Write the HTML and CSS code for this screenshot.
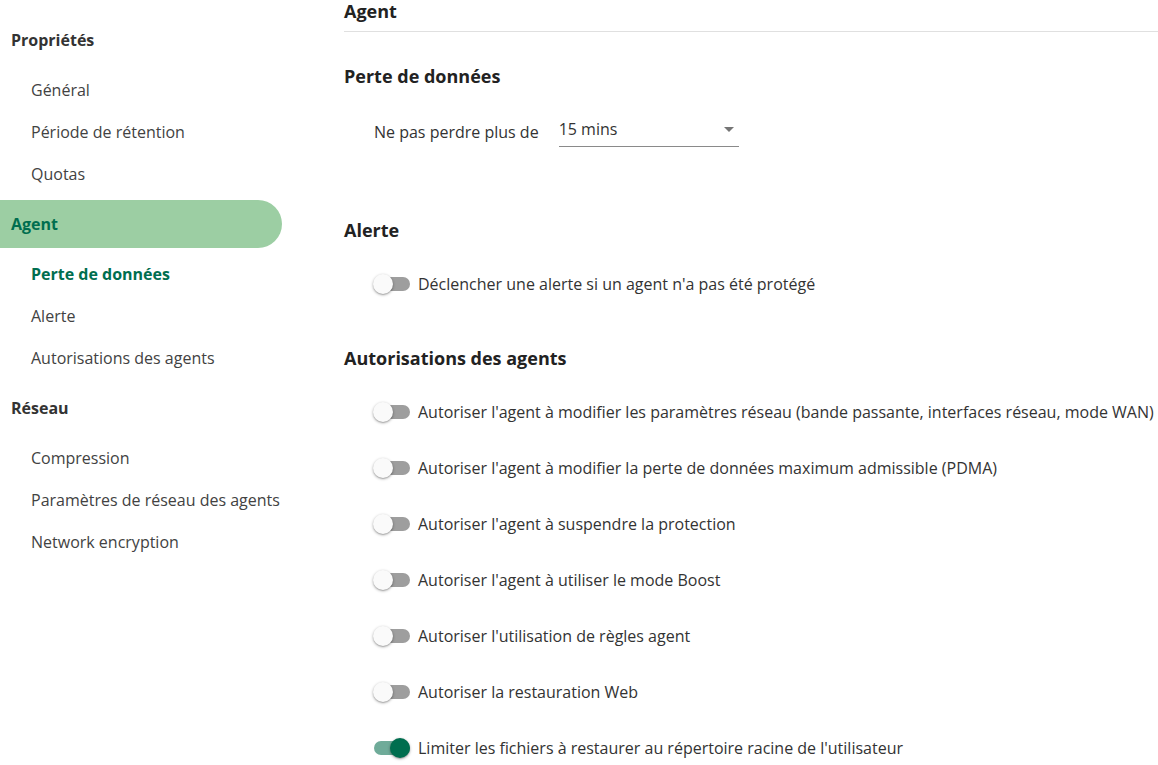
FILE: index.html
```html
<!DOCTYPE html>
<html lang="fr">
<head>
<meta charset="utf-8">
<title>Agent</title>
<link rel="stylesheet" href="styles.css">
</head>
<body>
<div class="layout">
  <nav class="sidebar">
    <div class="nav-group">
      <div class="nav-header">Propriétés</div>
      <ul class="nav-list">
        <li class="nav-item">Général</li>
        <li class="nav-item">Période de rétention</li>
        <li class="nav-item">Quotas</li>
      </ul>
    </div>
    <div class="nav-group">
      <div class="nav-header active">Agent</div>
      <ul class="nav-list">
        <li class="nav-item current">Perte de données</li>
        <li class="nav-item">Alerte</li>
        <li class="nav-item">Autorisations des agents</li>
      </ul>
    </div>
    <div class="nav-group">
      <div class="nav-header">Réseau</div>
      <ul class="nav-list">
        <li class="nav-item">Compression</li>
        <li class="nav-item">Paramètres de réseau des agents</li>
        <li class="nav-item">Network encryption</li>
      </ul>
    </div>
  </nav>

  <main class="content">
    <h1 class="page-title">Agent</h1>

    <section class="section section-loss">
      <h2 class="section-title">Perte de données</h2>
      <div class="field-row">
        <span class="field-label">Ne pas perdre plus de</span>
        <div class="select">
          <span class="select-value">15 mins</span>
          <span class="select-arrow"></span>
        </div>
      </div>
    </section>

    <section class="section section-alert">
      <h2 class="section-title">Alerte</h2>
      <div class="toggle-list">
        <label class="toggle-row"><span class="toggle"><span class="knob"></span></span><span class="toggle-text">Déclencher une alerte si un agent n'a pas été protégé</span></label>
      </div>
    </section>

    <section class="section section-perms">
      <h2 class="section-title">Autorisations des agents</h2>
      <div class="toggle-list">
        <label class="toggle-row"><span class="toggle"><span class="knob"></span></span><span class="toggle-text">Autoriser l'agent à modifier les paramètres réseau (bande passante, interfaces réseau, mode WAN)</span></label>
        <label class="toggle-row"><span class="toggle"><span class="knob"></span></span><span class="toggle-text">Autoriser l'agent à modifier la perte de données maximum admissible (PDMA)</span></label>
        <label class="toggle-row"><span class="toggle"><span class="knob"></span></span><span class="toggle-text">Autoriser l'agent à suspendre la protection</span></label>
        <label class="toggle-row"><span class="toggle"><span class="knob"></span></span><span class="toggle-text">Autoriser l'agent à utiliser le mode Boost</span></label>
        <label class="toggle-row"><span class="toggle"><span class="knob"></span></span><span class="toggle-text">Autoriser l'utilisation de règles agent</span></label>
        <label class="toggle-row"><span class="toggle"><span class="knob"></span></span><span class="toggle-text">Autoriser la restauration Web</span></label>
        <label class="toggle-row"><span class="toggle on"><span class="knob"></span></span><span class="toggle-text">Limiter les fichiers à restaurer au répertoire racine de l'utilisateur</span></label>
      </div>
    </section>
  </main>
</div>
</body>
</html>
```

FILE: styles.css
```css
* {
  box-sizing: border-box;
}

html, body {
  margin: 0;
  padding: 0;
  background: #ffffff;
  overflow: hidden;
}

body {
  font-family: "Open Sans", "Noto Sans", sans-serif;
  font-size: 16px;
  color: #333333;
  width: 1158px;
  height: 765px;
}

.layout {
  display: grid;
  grid-template-columns: 282px 1fr;
  column-gap: 62px;
  height: 765px;
}

/* Sidebar */
.sidebar {
  padding-top: 11px;
}

.nav-group {
  margin-top: 5px;
}

.nav-header {
  height: 48px;
  line-height: 48px;
  padding-left: 11px;
  font-weight: 700;
  font-size: 16px;
  color: #333333;
}

.nav-header.active {
  background: #9ccea3;
  color: #006e4f;
  border-radius: 0 24px 24px 0;
}

.nav-list {
  list-style: none;
  margin: 0;
  padding: 5px 0 0 0;
}

.nav-item {
  height: 42px;
  line-height: 42px;
  padding-left: 31px;
  color: #424242;
  white-space: nowrap;
}

.nav-item.current {
  color: #006e4f;
  font-weight: 700;
}

/* Content */
.content {
  min-width: 0;
}

.page-title {
  margin: 0;
  font-size: 18px;
  font-weight: 700;
  line-height: 22px;
  padding-bottom: 9px;
  border-bottom: 1px solid #e0e0e0;
  color: #222222;
}

.section-title {
  margin: 0;
  font-size: 18px;
  font-weight: 700;
  line-height: 24px;
  color: #222222;
}

.section-loss {
  margin-top: 32px;
}

.section-alert {
  margin-top: 66px;
}

.section-perms {
  margin-top: 46px;
}

.field-row {
  display: flex;
  align-items: flex-start;
  margin-top: 24px;
  padding-left: 30px;
  height: 40px;
}

.field-label {
  line-height: 40px;
  margin-right: 20px;
  color: #333333;
}

.select {
  width: 180px;
  height: 35px;
  border-bottom: 1px solid #8a8a8a;
  display: flex;
  align-items: flex-start;
  justify-content: space-between;
  padding-top: 5px;
}

.select-value {
  line-height: 24px;
  color: #333333;
}

.select-arrow {
  width: 0;
  height: 0;
  margin-top: 10px;
  margin-right: 5px;
  border-left: 5px solid transparent;
  border-right: 5px solid transparent;
  border-top: 5px solid #757575;
}

.toggle-list {
  margin-top: 26px;
  display: flex;
  flex-direction: column;
  gap: 24px;
  padding-left: 30px;
}

.toggle-row {
  display: flex;
  align-items: center;
  height: 32px;
  white-space: nowrap;
}

.toggle {
  position: relative;
  width: 36px;
  height: 14px;
  border-radius: 7px;
  background: #9e9e9e;
  flex: none;
  margin-right: 8px;
}

.toggle .knob {
  position: absolute;
  top: -3px;
  left: -1px;
  width: 20px;
  height: 20px;
  border-radius: 50%;
  background: #fafafa;
  box-shadow: 0 1px 3px rgba(0, 0, 0, 0.35), 0 1px 1px rgba(0, 0, 0, 0.12);
}

.toggle.on {
  background: #6fab99;
}

.toggle.on .knob {
  left: 16px;
  background: #006e4f;
}

.toggle-text {
  color: #333333;
  line-height: 24px;
}
```
